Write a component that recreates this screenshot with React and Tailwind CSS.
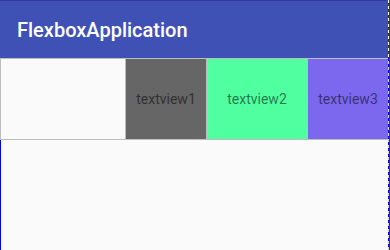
export default function App() {
  return (
    <div className="w-[390px] h-[250px] flex bg-[#fafafa] overflow-hidden" style={{ fontFamily: "Roboto, 'Noto Sans', sans-serif" }}>
      <div className="flex-1 flex flex-col min-w-0">
        <div className="h-[58px] bg-[#3f51b5] border-t border-[#2f3e94] flex items-center pl-[17px]">
          <span className="text-white text-[20px] font-medium leading-none">FlexboxApplication</span>
        </div>
        <div className="h-[82px] flex border border-r-0 border-[#bdbdbd]">
          <div className="w-[124px] bg-[#fafafa]" />
          <div className="w-[81px] bg-[#666666] border-l border-[#bdbdbd] flex items-center justify-center text-[14px] text-black/55">textview1</div>
          <div className="w-[101px] bg-[#50ffa0] border-l border-[#bdbdbd] flex items-center justify-center text-[14px] text-black/55">textview2</div>
          <div className="flex-1 bg-[#7b68ee] border-l border-[#bdbdbd] flex items-center justify-center text-[14px] text-black/55">textview3</div>
        </div>
        <div className="flex-1 flex">
          <div className="w-[1px] bg-[#0000ff]" />
        </div>
      </div>
      <div className="w-[1px] flex flex-col">
        <div className="h-[58px] bg-[repeating-linear-gradient(to_bottom,#ffffff_0px,#ffffff_3px,#333333_3px,#333333_6px)]" />
        <div className="flex-1 bg-[repeating-linear-gradient(to_bottom,#0000ff_0px,#0000ff_3px,#cfcfcf_3px,#cfcfcf_6px)]" />
      </div>
      <div className="w-[1px] bg-[#3a3a3a]" />
    </div>
  );
}
